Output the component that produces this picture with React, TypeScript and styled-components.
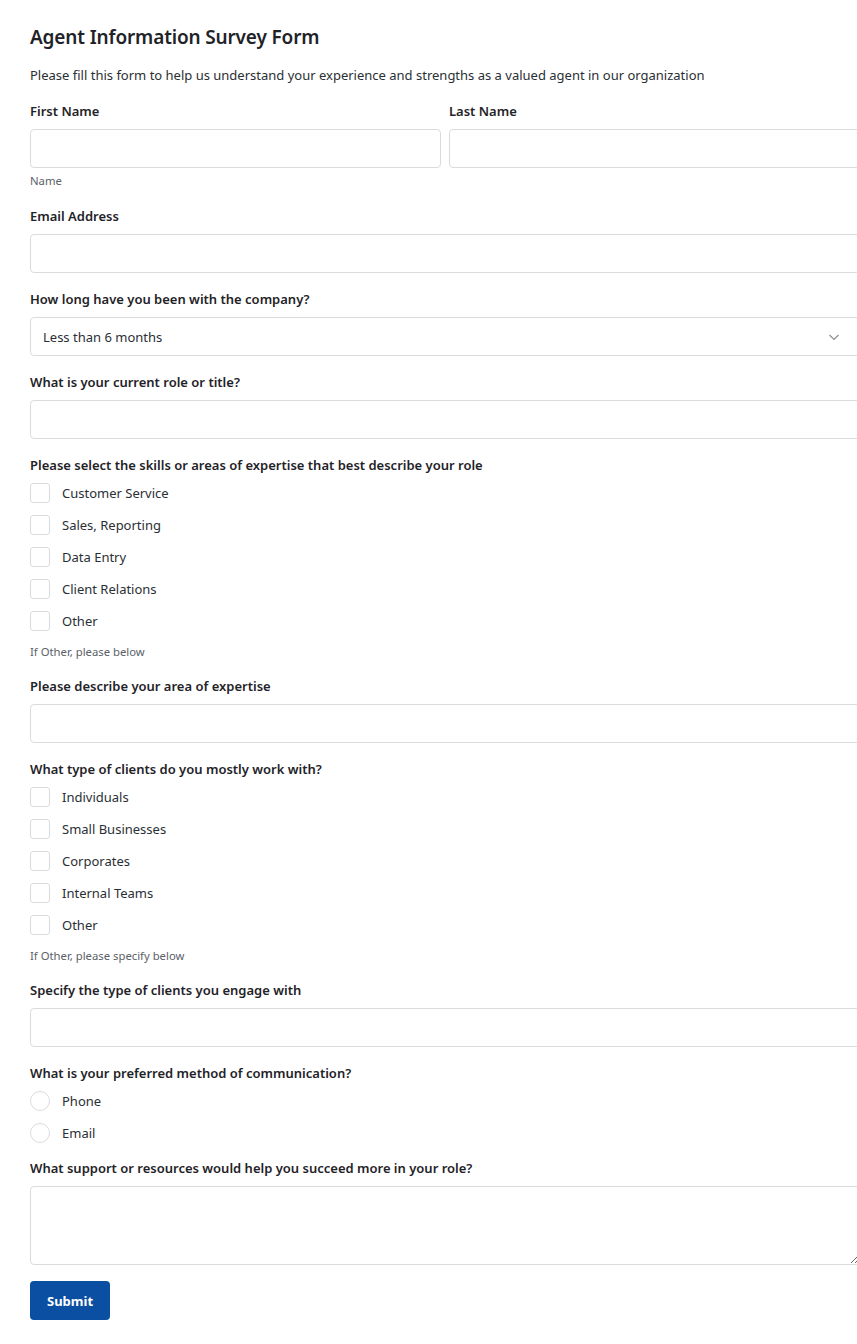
import React from 'react'
import styled, { createGlobalStyle } from 'styled-components'

const GlobalStyle = createGlobalStyle`
  html, body {
    margin: 0;
    padding: 0;
    background: #ffffff;
    overflow-x: hidden;
  }
  body {
    font-family: "Noto Sans", "Open Sans", sans-serif;
    color: #1f2328;
  }
`

const skills = [
  'Customer Service',
  'Sales, Reporting',
  'Data Entry',
  'Client Relations',
  'Other',
]

const clients = [
  'Individuals',
  'Small Businesses',
  'Corporates',
  'Internal Teams',
  'Other',
]

const App: React.FC = () => (
  <>
    <GlobalStyle />
    <Form onSubmit={(e) => e.preventDefault()}>
      <Title>Agent Information Survey Form</Title>
      <Intro>
        Please fill this form to help us understand your experience and
        strengths as a valued agent in our organization
      </Intro>

      <NameRow>
        <Field>
          <Label>First Name</Label>
          <Input type="text" />
        </Field>
        <Field>
          <Label>Last Name</Label>
          <Input type="text" />
        </Field>
      </NameRow>
      <Hint>Name</Hint>

      <Field>
        <Label>Email Address</Label>
        <Input type="email" />
      </Field>

      <Field>
        <Label>How long have you been with the company?</Label>
        <SelectWrap>
          <Select defaultValue="lt6">
            <option value="lt6">Less than 6 months</option>
            <option value="6to12">6 months - 1 year</option>
            <option value="1to3">1 - 3 years</option>
            <option value="gt3">More than 3 years</option>
          </Select>
          <Chevron viewBox="0 0 16 16">
            <path d="M3.5 6 L8 10.5 L12.5 6" />
          </Chevron>
        </SelectWrap>
      </Field>

      <Field>
        <Label>What is your current role or title?</Label>
        <Input type="text" />
      </Field>

      <Field>
        <Label>
          Please select the skills or areas of expertise that best describe
          your role
        </Label>
        <OptionList>
          {skills.map((s) => (
            <Option key={s}>
              <Box type="checkbox" />
              {s}
            </Option>
          ))}
        </OptionList>
        <Hint>If Other, please below</Hint>
      </Field>

      <Field>
        <Label>Please describe your area of expertise</Label>
        <Input type="text" />
      </Field>

      <Field>
        <Label>What type of clients do you mostly work with?</Label>
        <OptionList>
          {clients.map((c) => (
            <Option key={c}>
              <Box type="checkbox" />
              {c}
            </Option>
          ))}
        </OptionList>
        <Hint>If Other, please specify below</Hint>
      </Field>

      <Field>
        <Label>Specify the type of clients you engage with</Label>
        <Input type="text" />
      </Field>

      <Field>
        <Label>What is your preferred method of communication?</Label>
        <OptionList $last>
          {['Phone', 'Email'].map((m) => (
            <Option key={m}>
              <Box type="radio" name="method" $round />
              {m}
            </Option>
          ))}
        </OptionList>
      </Field>

      <Field>
        <Label>
          What support or resources would help you succeed more in your role?
        </Label>
        <TextArea />
      </Field>

      <SubmitButton type="submit">Submit</SubmitButton>
    </Form>
  </>
)

const Form = styled.form`
  width: 830px;
  padding: 25px 0 24px 30px;
  display: flex;
  flex-direction: column;
`

const Title = styled.h1`
  margin: 0 0 16px;
  font-size: 19px;
  line-height: 24px;
  font-weight: 600;
  letter-spacing: -0.15px;
  color: #1f2328;
`

const Intro = styled.p`
  margin: 0 0 16px;
  font-size: 13px;
  line-height: 20px;
  color: #2a2f35;
`

const NameRow = styled.div`
  display: grid;
  grid-template-columns: 1fr 1fr;
  gap: 8px;
`

const Field = styled.div`
  display: flex;
  flex-direction: column;
  margin-bottom: 16px;

  ${NameRow} & {
    margin-bottom: 0;
  }
`

const Label = styled.label`
  font-size: 13px;
  line-height: 20px;
  font-weight: 600;
  color: #1f2328;
  margin-bottom: 8px;
`

const Hint = styled.div`
  font-size: 11.3px;
  line-height: 16px;
  color: #5b6168;
  margin: 5px 0 17px;

  ${Field} > & {
    margin: 0;
  }
`

const Input = styled.input`
  box-sizing: border-box;
  height: 39px;
  width: 100%;
  border: 1px solid #d9dcdf;
  border-radius: 4px;
  padding: 0 12px;
  font: inherit;
  font-size: 13px;
  background: #fff;
  outline: none;
`

const SelectWrap = styled.div`
  position: relative;
`

const Select = styled.select`
  box-sizing: border-box;
  appearance: none;
  height: 39px;
  width: 100%;
  border: 1px solid #d9dcdf;
  border-radius: 4px;
  padding: 0 12px;
  font: inherit;
  font-size: 13px;
  color: #2a2f35;
  background: #fff;
  outline: none;
`

const Chevron = styled.svg`
  position: absolute;
  right: 18px;
  top: 12px;
  width: 16px;
  height: 16px;
  fill: none;
  stroke: #8a9097;
  stroke-width: 1.2;
  pointer-events: none;
`

const OptionList = styled.div<{ $last?: boolean }>`
  display: flex;
  flex-direction: column;
  gap: 12px;
  margin-bottom: ${(p) => (p.$last ? '-1px' : '13px')};
`

const Option = styled.label`
  display: flex;
  align-items: center;
  gap: 12px;
  font-size: 13px;
  line-height: 20px;
  color: #2a2f35;
`

const Box = styled.input<{ $round?: boolean }>`
  appearance: none;
  box-sizing: border-box;
  margin: 0;
  width: 20px;
  height: 20px;
  border: 1px solid #d9dcdf;
  border-radius: ${(p) => (p.$round ? '50%' : '3px')};
  background: #fff;
`

const TextArea = styled.textarea`
  box-sizing: border-box;
  height: 79px;
  width: 100%;
  border: 1px solid #d9dcdf;
  border-radius: 4px;
  padding: 8px 12px;
  font: inherit;
  font-size: 13px;
  resize: vertical;
  outline: none;
`

const SubmitButton = styled.button`
  align-self: flex-start;
  height: 39px;
  padding: 0 17px;
  border: none;
  border-radius: 4px;
  background: #0a4fa1;
  color: #fff;
  font: inherit;
  font-size: 13px;
  font-weight: 700;
  cursor: pointer;
`

export default App
